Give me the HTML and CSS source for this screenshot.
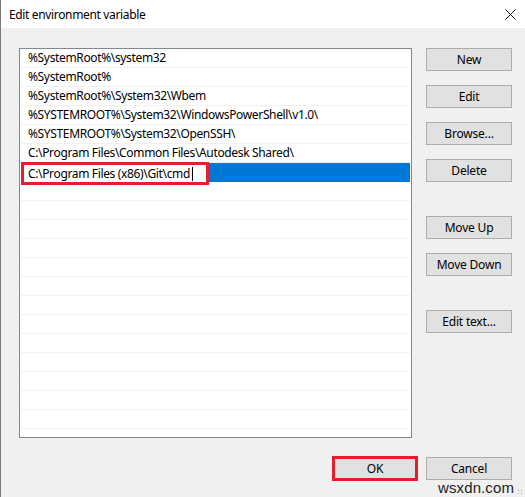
FILE: index.html
```html
<!DOCTYPE html>
<html lang="en">
<head>
<meta charset="utf-8">
<title>Edit environment variable</title>
<link rel="stylesheet" href="styles.css">
</head>
<body>
<div class="window">
  <div class="titlebar">
    <span class="title">Edit environment variable</span>
    <span class="close" aria-label="Close">
      <svg width="11" height="11" viewBox="0 0 11 11"><path d="M0.5 0.5 L10.5 10.5 M10.5 0.5 L0.5 10.5" stroke="#111" stroke-width="1" fill="none"/></svg>
    </span>
  </div>
  <div class="body">
    <div class="main">
      <div class="list">
        <div class="row">%SystemRoot%\system32</div>
        <div class="row">%SystemRoot%</div>
        <div class="row">%SystemRoot%\System32\Wbem</div>
        <div class="row">%SYSTEMROOT%\System32\WindowsPowerShell\v1.0\</div>
        <div class="row">%SYSTEMROOT%\System32\OpenSSH\</div>
        <div class="row">C:\Program Files\Common Files\Autodesk Shared\</div>
        <div class="row selected">
          <div class="editor"><span>C:\Program Files (x86)\Git\cmd</span><span class="caret"></span></div>
        </div>
        <div class="row"></div>
        <div class="row"></div>
        <div class="row"></div>
        <div class="row"></div>
        <div class="row"></div>
        <div class="row"></div>
        <div class="row"></div>
        <div class="row"></div>
        <div class="row"></div>
        <div class="row"></div>
        <div class="row"></div>
        <div class="row"></div>
        <div class="row"></div>
      </div>
      <div class="side">
        <div class="group">
          <button class="btn">New</button>
          <button class="btn">Edit</button>
          <button class="btn">Browse...</button>
          <button class="btn">Delete</button>
        </div>
        <div class="group">
          <button class="btn">Move Up</button>
          <button class="btn">Move Down</button>
        </div>
        <div class="group">
          <button class="btn">Edit text...</button>
        </div>
      </div>
    </div>
    <div class="footer">
      <button class="btn ok">OK</button>
      <button class="btn">Cancel</button>
    </div>
  </div>
  <span class="watermark">wsxdn.com</span>
  <span class="grip"></span>
</div>
</body>
</html>
```
FILE: styles.css
```css
html, body {
  margin: 0;
  padding: 0;
}
body {
  width: 525px;
  height: 497px;
  overflow: hidden;
  background: #f0f0f0;
  font-family: "Noto Sans", "Liberation Sans", sans-serif;
  font-size: 12px;
  letter-spacing: -0.35px;
  color: #000;
}
.window {
  position: relative;
  width: 525px;
  height: 497px;
  box-sizing: border-box;
  border-left: 1px solid #7a7a7a;
  background: #f0f0f0;
}
.titlebar {
  height: 28px;
  background: #fff;
  display: flex;
  align-items: center;
  justify-content: space-between;
  padding: 0 9px 0 8px;
}
.title {
  font-size: 12px;
  line-height: 16px;
  padding-top: 1px;
}
.close {
  display: flex;
  padding-top: 1px;
}
.body {
  display: flex;
  flex-direction: column;
  padding: 20px 13px 0 18px;
}
.main {
  display: flex;
  gap: 14px;
  align-items: flex-start;
}
.list {
  width: 393px;
  height: 390px;
  box-sizing: border-box;
  border: 1px solid #828790;
  background: #fff;
  overflow: hidden;
}
.row {
  height: 18px;
  border-bottom: 1px solid #f0f0f0;
  line-height: 18px;
  padding-left: 7px;
  white-space: nowrap;
  margin: 0 1px;
}
.row.selected {
  position: relative;
  background: #0078d7;
  border-bottom-color: #0078d7;
}
.editor {
  position: absolute;
  left: 0;
  top: -1px;
  width: 188px;
  height: 23px;
  box-sizing: border-box;
  border: 3px solid #e0202c;
  background: #fff;
  padding-left: 4px;
  line-height: 17px;
  display: flex;
  align-items: center;
}
.caret {
  display: inline-block;
  width: 1px;
  height: 14px;
  background: #000;
  margin-left: 2px;
}
.side {
  display: flex;
  flex-direction: column;
  gap: 34px;
}
.group {
  display: flex;
  flex-direction: column;
  gap: 14px;
}
.btn {
  width: 86px;
  height: 23px;
  box-sizing: border-box;
  border: 1px solid #adadad;
  background: #e1e1e1;
  font-family: inherit;
  font-size: 12px;
  letter-spacing: -0.2px;
  color: #000;
  padding: 0;
  margin: 0;
}
.footer {
  display: flex;
  justify-content: flex-end;
  gap: 8px;
  margin-top: 19px;
}
.btn.ok {
  border: 3px solid #e0202c;
  height: 25px;
  margin-top: -1px;
}
.watermark {
  position: absolute;
  right: 11px;
  bottom: 1px;
  font-family: "Liberation Sans", sans-serif;
  font-size: 15px;
  color: #222;
  letter-spacing: 0.1px;
}
.grip {
  position: absolute;
  right: 2px;
  bottom: 2px;
  width: 6px;
  height: 6px;
  background-image: radial-gradient(circle, #b0b0b0 0.8px, transparent 1px);
  background-size: 3px 3px;
}
```
